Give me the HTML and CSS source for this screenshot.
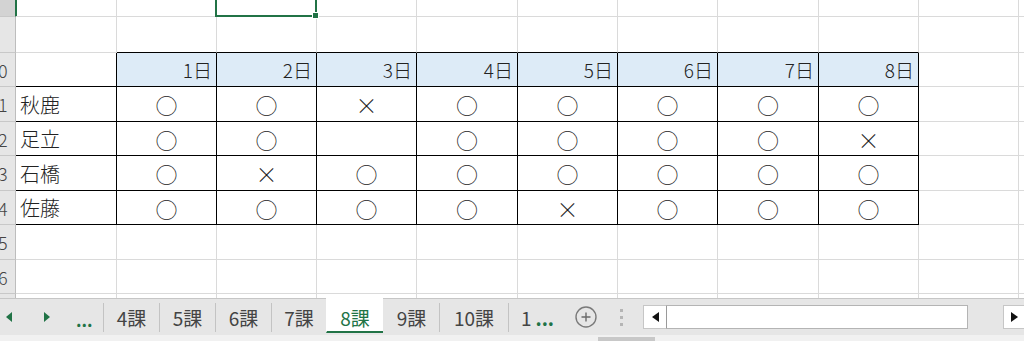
FILE: index.html
```html
<!DOCTYPE html>
<html lang="ja">
<head>
  <meta charset="UTF-8" />
  <meta name="viewport" content="width=device-width, initial-scale=1.0" />
  <title>出欠表 - 8課</title>
  <link rel="stylesheet" href="styles.css">
</head>
<body>
  <!-- Feuille -->
  <div class="sheet">
    <table class="grid">
      <colgroup>
        <col class="w-rh"><col class="w-a"><col class="w-n"><col class="w-n"><col class="w-n"><col class="w-m">
        <col class="w-n"><col class="w-n"><col class="w-m"><col class="w-n"><col class="w-n"><col class="w-k">
      </colgroup>
      <tr class="h17">
        <th class="rh sel"></th>
        <td></td><td></td>
        <td class="cur"><div class="selection"><span class="handle"></span></div></td>
        <td></td><td></td><td></td><td></td><td></td><td></td><td></td><td></td>
      </tr>
      <tr class="h36">
        <th class="rh"></th>
        <td></td>
        <td class="tt"></td><td class="tt"></td><td class="tt"></td><td class="tt"></td>
        <td class="tt"></td><td class="tt"></td><td class="tt"></td><td class="tt"></td>
        <td></td><td></td>
      </tr>
      <tr class="h34">
        <th class="rh"><div class="rn">10</div></th>
        <td class="ha"></td>
        <td class="hd">1日</td><td class="hd">2日</td><td class="hd">3日</td><td class="hd">4日</td>
        <td class="hd">5日</td><td class="hd">6日</td><td class="hd">7日</td><td class="hd">8日</td>
        <td></td><td></td>
      </tr>
      <tr class="h35">
        <th class="rh"><div class="rn">11</div></th>
        <td class="nm">秋鹿</td>
        <td class="mk">○</td><td class="mk">○</td><td class="mk x">×</td><td class="mk">○</td>
        <td class="mk">○</td><td class="mk">○</td><td class="mk">○</td><td class="mk">○</td>
        <td></td><td></td>
      </tr>
      <tr class="h34">
        <th class="rh"><div class="rn">12</div></th>
        <td class="nm">足立</td>
        <td class="mk">○</td><td class="mk">○</td><td class="mk"></td><td class="mk">○</td>
        <td class="mk">○</td><td class="mk">○</td><td class="mk">○</td><td class="mk x">×</td>
        <td></td><td></td>
      </tr>
      <tr class="h35">
        <th class="rh"><div class="rn">13</div></th>
        <td class="nm">石橋</td>
        <td class="mk">○</td><td class="mk x">×</td><td class="mk">○</td><td class="mk">○</td>
        <td class="mk">○</td><td class="mk">○</td><td class="mk">○</td><td class="mk">○</td>
        <td></td><td></td>
      </tr>
      <tr class="h34">
        <th class="rh"><div class="rn">14</div></th>
        <td class="nm">佐藤</td>
        <td class="mk">○</td><td class="mk">○</td><td class="mk">○</td><td class="mk">○</td>
        <td class="mk x">×</td><td class="mk">○</td><td class="mk">○</td><td class="mk">○</td>
        <td></td><td></td>
      </tr>
      <tr class="h35">
        <th class="rh"><div class="rn">15</div></th>
        <td></td><td></td><td></td><td></td><td></td><td></td><td></td><td></td><td></td><td></td><td></td>
      </tr>
      <tr class="h34">
        <th class="rh"><div class="rn">16</div></th>
        <td></td><td></td><td></td><td></td><td></td><td></td><td></td><td></td><td></td><td></td><td></td>
      </tr>
      <tr class="h34">
        <th class="rh"></th>
        <td></td><td></td><td></td><td></td><td></td><td></td><td></td><td></td><td></td><td></td><td></td>
      </tr>
    </table>
  </div>

  <!-- Barre des onglets -->
  <div class="tabbar">
    <div class="nav">
      <span class="arrow prev"></span>
      <span class="arrow next"></span>
      <span class="more">...</span>
    </div>
    <div class="tabs">
      <span class="tab">4課</span>
      <span class="tab">5課</span>
      <span class="tab">6課</span>
      <span class="tab narrow">7課</span>
      <span class="tab active">8課</span>
      <span class="tab">9課</span>
      <span class="tab wide">10課</span>
      <span class="tab last">1 <span class="dots">...</span></span>
    </div>
    <span class="add">
      <svg width="22" height="22" viewBox="0 0 22 22">
        <circle cx="11" cy="11" r="10" fill="none" stroke="#7a7a7a" stroke-width="1.4"/>
        <path d="M11 6.5v9M6.5 11h9" stroke="#6a6a6a" stroke-width="1.4"/>
      </svg>
    </span>
    <span class="grip">
      <svg width="4" height="17" viewBox="0 0 4 17">
        <rect x="0" y="0" width="3" height="3" fill="#b5b5b5"/>
        <rect x="0" y="7" width="3" height="3" fill="#b5b5b5"/>
        <rect x="0" y="14" width="3" height="3" fill="#b5b5b5"/>
      </svg>
    </span>
    <div class="hscroll">
      <span class="sbtn left"><span class="tri-l"></span></span>
      <span class="track"></span>
      <span class="gap"></span>
      <span class="sbtn right"><span class="tri-r"></span></span>
    </div>
  </div>
  <div class="status"><span class="thumb"></span></div>
</body>
</html>
```

FILE: styles.css
```css
/* ===============================
   BASE
   =============================== */
* {
  margin: 0;
  padding: 0;
  box-sizing: border-box;
}
body {
  width: 1024px;
  height: 341px;
  overflow: hidden;
  background: #fff;
  color: #000;
  font-family: "Noto Sans CJK JP", "Noto Sans", sans-serif;
}

/* ===============================
   FEUILLE
   =============================== */
.sheet {
  height: 298px;
  overflow: hidden;
}
.grid {
  border-collapse: separate;
  border-spacing: 0;
  table-layout: fixed;
  width: 1025px;
  font-size: 19px;
  font-weight: 300;
}
.w-rh { width: 16px; }
.w-a { width: 101px; }
.w-n { width: 100px; }
.w-m { width: 101px; }
.w-k { width: 6px; }

.h17 { height: 17px; }
.h34 { height: 34px; }
.h35 { height: 35px; }
.h36 { height: 36px; }

.grid td,
.grid th {
  padding: 0;
  font-weight: 300;
  white-space: nowrap;
  vertical-align: middle;
  border-right: 1px solid #dadada;
  border-bottom: 1px solid #dadada;
}

/* en-têtes de ligne */
.grid th.rh {
  background: #e6e6e6;
  border-right-color: #bdbdbd;
  border-bottom-color: #c8c8c8;
  color: #444;
}
.grid th.sel {
  background: #d3d3d3;
  border-right-color: #217346;
  box-shadow: 1px 0 0 #217346;
}
.rn {
  width: 30px;
  margin-left: -17px;
  text-align: center;
  font-size: 18px;
  line-height: 1;
}

/* tableau */
.grid td.tt { border-bottom-color: #000; }
.grid td.ha {
  border-right-color: #000;
  border-bottom-color: #000;
}
.grid td.hd {
  background: #ddebf7;
  text-align: right;
  padding-right: 4px;
  color: #222;
  border-right-color: #000;
  border-bottom-color: #000;
}
.grid td.nm {
  padding-left: 4px;
  font-size: 20px;
  color: #222;
  border-right-color: #000;
  border-bottom-color: #000;
}
.grid td.mk {
  text-align: center;
  font-size: 22px;
  color: #222;
  border-right-color: #000;
  border-bottom-color: #000;
}

/* cellule active */
.cur {
  position: relative;
}
.selection {
  position: absolute;
  left: -2px;
  top: -10px;
  width: 102px;
  height: 27px;
  border: 2px solid #217346;
  z-index: 2;
}
.handle {
  position: absolute;
  right: -4px;
  bottom: -4px;
  width: 7px;
  height: 7px;
  background: #217346;
  border: 1px solid #fff;
}

/* ===============================
   ONGLETS
   =============================== */
.tabbar {
  display: flex;
  align-items: center;
  height: 37px;
  background: #e6e6e6;
  border-top: 1px solid #c6c6c6;
  font-size: 19px;
  color: #444;
}
.nav {
  width: 103px;
  height: 100%;
  display: flex;
  align-items: center;
  flex-shrink: 0;
}
.arrow {
  width: 0;
  height: 0;
  border-top: 5px solid transparent;
  border-bottom: 5px solid transparent;
}
.arrow.prev {
  margin-left: 6px;
  border-right: 6px solid #217346;
}
.arrow.next {
  margin-left: 32px;
  border-left: 6px solid #217346;
}
.more {
  margin-left: 26px;
  margin-top: 4px;
  color: #217346;
  font-weight: bold;
  font-size: 17px;
}
.tabs {
  display: flex;
  align-self: stretch;
}
.tab {
  display: flex;
  align-items: center;
  justify-content: center;
  flex-shrink: 0;
  width: 56px;
  height: 29px;
  margin-top: 4px;
  border-left: 1px solid #c3c3c3;
}
.tab.narrow { width: 55px; }
.tab.wide { width: 69px; }
.tab.last { width: 58px; }
.tab.active {
  width: 57px;
  height: 35px;
  margin-top: -1px;
  padding-top: 5px;
  background: #fff;
  color: #217346;
  border-left-color: transparent;
  border-bottom: 2px solid #217346;
}
.tab.active + .tab {
  border-left-color: transparent;
}
.dots {
  color: #217346;
  font-weight: bold;
  margin-left: 4px;
}
.add {
  display: flex;
  margin-left: 9px;
}
.grip {
  display: flex;
  margin-left: 23px;
}

/* barre de défilement */
.hscroll {
  display: flex;
  margin-left: auto;
  width: 381px;
  height: 24px;
}
.sbtn {
  display: flex;
  align-items: center;
  justify-content: center;
  background: #fff;
  border: 1px solid #c6c6c6;
}
.sbtn.left {
  width: 24px;
  border-right-color: #9a9a9a;
}
.sbtn.right {
  width: 21px;
  border-right: none;
}
.track {
  width: 301px;
  background: #fff;
  border: 1px solid #b4b4b4;
  border-left: none;
}
.gap {
  width: 35px;
}
.tri-l {
  border-top: 5px solid transparent;
  border-bottom: 5px solid transparent;
  border-right: 7px solid #111;
}
.tri-r {
  border-top: 5px solid transparent;
  border-bottom: 5px solid transparent;
  border-left: 7px solid #111;
}

.status {
  height: 6px;
  background: #f1f1f1;
  padding-top: 2px;
}
.thumb {
  display: block;
  width: 57px;
  height: 4px;
  margin-left: 598px;
  background: #c8c8c8;
}
```
